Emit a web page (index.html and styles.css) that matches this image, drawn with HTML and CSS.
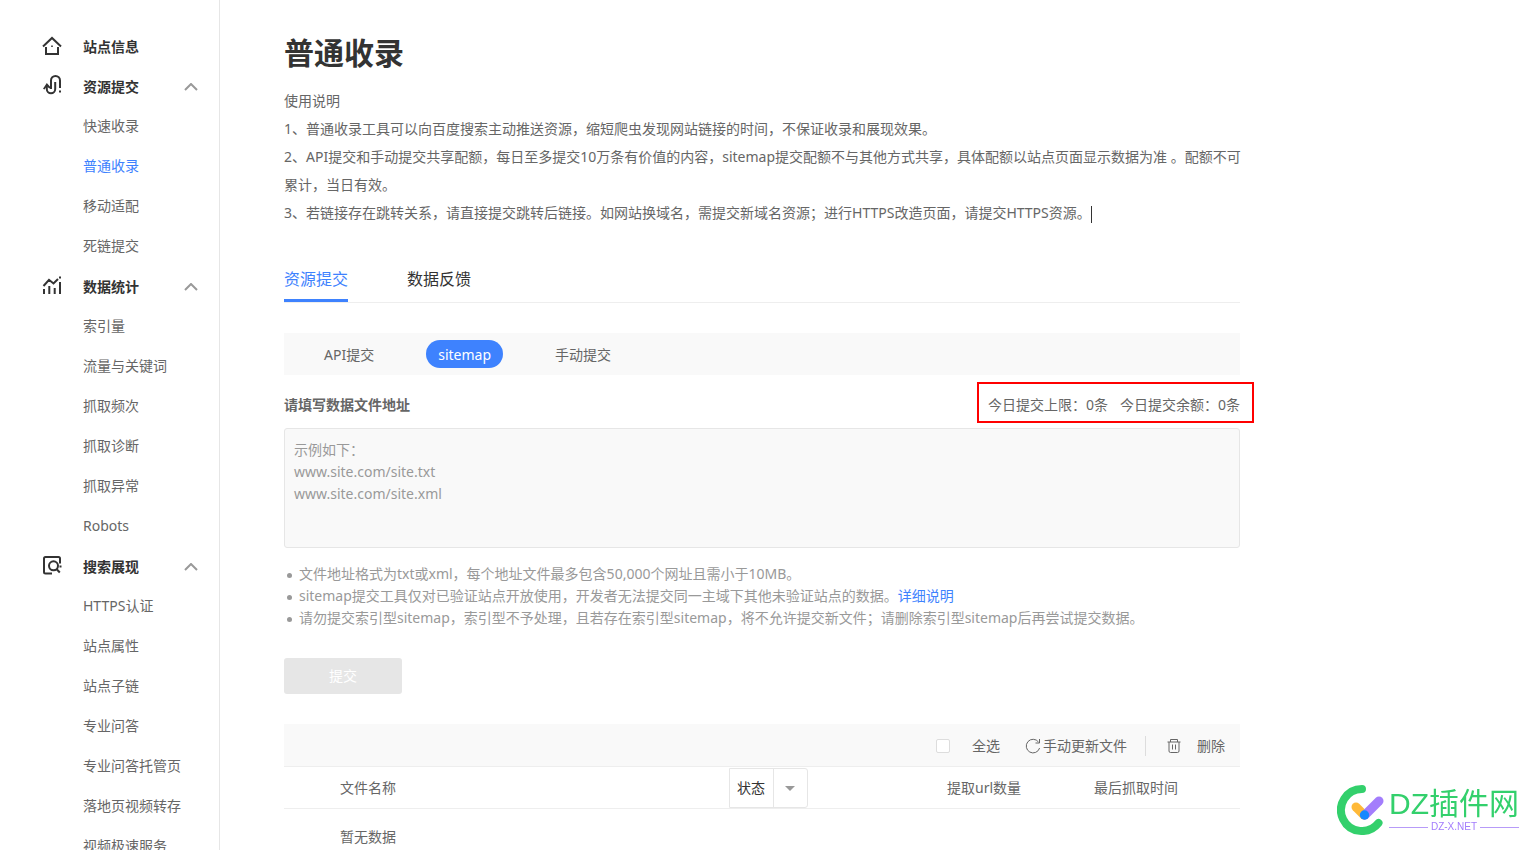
FILE: index.html
```html
<!DOCTYPE html>
<html lang="zh-CN">
<head>
<meta charset="utf-8">
<title>普通收录</title>
<link rel="stylesheet" href="styles.css">
</head>
<body>
<div class="page">
  <aside class="sidebar">
    <nav>
      <section class="group">
        <a class="group-head" href="#">
          <svg class="group-icon" viewBox="0 0 20 20"><path d="M1 11.500 10 3l9 8.500M4 12V19h12v-7"/><path class="solid" d="M9.200 10.500h1.600v1.600H9.200z"/></svg>
          <span>站点信息</span>
        </a>
      </section>
      <section class="group">
        <button class="group-head" type="button">
          <svg class="group-icon" viewBox="0 0 20 20"><path d="M4.800 11v3a4.200 4.200 0 0 0 8.400 0V7M9 14V5.500a4.500 4.500 0 0 1 9 0v7.500"/><path class="solid" d="M1 13.800 4.800 8 9 12.800 7.500 13.600 4.800 11.500 2.500 14.500zM17 15.500h2v2h-2z"/></svg>
          <span>资源提交</span>
          <svg class="chevron" viewBox="0 0 14 8"><path d="M1 7l6-6 6 6"/></svg>
        </button>
        <ul>
          <li><a href="#">快速收录</a></li>
          <li><a class="current" href="#">普通收录</a></li>
          <li><a href="#">移动适配</a></li>
          <li><a href="#">死链提交</a></li>
        </ul>
      </section>
      <section class="group">
        <button class="group-head" type="button">
          <svg class="group-icon" viewBox="0 0 20 20"><path d="M1.500 11 7 4.800l4.500 3.700L16 4M2 14v5M7.300 11v8M12.700 13v6M18 7v12"/><path class="solid" d="M17 1.500h2v2h-2z"/></svg>
          <span>数据统计</span>
          <svg class="chevron" viewBox="0 0 14 8"><path d="M1 7l6-6 6 6"/></svg>
        </button>
        <ul>
          <li><a href="#">索引量</a></li>
          <li><a href="#">流量与关键词</a></li>
          <li><a href="#">抓取频次</a></li>
          <li><a href="#">抓取诊断</a></li>
          <li><a href="#">抓取异常</a></li>
          <li><a href="#">Robots</a></li>
        </ul>
      </section>
      <section class="group">
        <button class="group-head" type="button">
          <svg class="group-icon" viewBox="0 0 20 20"><path d="M10 18.500H3.500a1.500 1.500 0 0 1-1.500-1.500V3.500A1.500 1.500 0 0 1 3.500 2h13A1.500 1.500 0 0 1 18 3.500v5"/><circle cx="11.500" cy="10.800" r="4.500"/><path d="M14.500 14l3.300 3.500"/><path class="solid" d="M17.500 10.500h2v2h-2z"/></svg>
          <span>搜索展现</span>
          <svg class="chevron" viewBox="0 0 14 8"><path d="M1 7l6-6 6 6"/></svg>
        </button>
        <ul>
          <li><a href="#">HTTPS认证</a></li>
          <li><a href="#">站点属性</a></li>
          <li><a href="#">站点子链</a></li>
          <li><a href="#">专业问答</a></li>
          <li><a href="#">专业问答托管页</a></li>
          <li><a href="#">落地页视频转存</a></li>
          <li><a href="#">视频极速服务</a></li>
        </ul>
      </section>
    </nav>
  </aside>

  <main class="content">
    <h1>普通收录</h1>
    <div class="intro">
      <p>使用说明</p>
      <p>1、普通收录工具可以向百度搜索主动推送资源，缩短爬虫发现网站链接的时间，不保证收录和展现效果。</p>
      <p>2、API提交和手动提交共享配额，每日至多提交10万条有价值的内容，sitemap提交配额不与其他方式共享，具体配额以站点页面显示数据为准 。配额不可<br>累计，当日有效。</p>
      <p>3、若链接存在跳转关系，请直接提交跳转后链接。如网站换域名，需提交新域名资源；进行HTTPS改造页面，请提交HTTPS资源。<span class="caret"></span></p>
    </div>

    <div class="tabs">
      <a class="tab active" href="#">资源提交</a>
      <a class="tab" href="#">数据反馈</a>
    </div>

    <div class="modes">
      <button class="mode" type="button">API提交</button>
      <button class="mode selected" type="button">sitemap</button>
      <button class="mode" type="button">手动提交</button>
    </div>

    <form>
      <div class="field-head">
        <label for="urls">请填写数据文件地址</label>
        <div class="quota"><span>今日提交上限：0条</span><span>今日提交余额：0条</span></div>
      </div>
      <textarea id="urls" placeholder="示例如下：
www.site.com/site.txt
www.site.com/site.xml"></textarea>
      <ul class="tips">
        <li>文件地址格式为txt或xml，每个地址文件最多包含50,000个网址且需小于10MB。</li>
        <li>sitemap提交工具仅对已验证站点开放使用，开发者无法提交同一主域下其他未验证站点的数据。<a href="#">详细说明</a></li>
        <li>请勿提交索引型sitemap，索引型不予处理，且若存在索引型sitemap，将不允许提交新文件；请删除索引型sitemap后再尝试提交数据。</li>
      </ul>
      <button class="submit" type="button">提交</button>
    </form>

    <div class="toolbar">
      <label class="select-all"><input type="checkbox"><span>全选</span></label>
      <button class="tool refresh" type="button">
        <svg viewBox="0 0 16 16"><path d="M13.500 4A6.800 6.800 0 1 0 14.600 10M14.500 1v4h-4"/></svg>
        <span>手动更新文件</span>
      </button>
      <button class="tool remove" type="button">
        <svg viewBox="0 0 16 16"><path d="M1.500 4h13M4.500 4V1.500h7V4M3 4v9a1.500 1.500 0 0 0 1.500 1.500h7A1.500 1.500 0 0 0 13 13V4M6.500 6.500v5M9.500 6.500v5"/></svg>
        <span>删除</span>
      </button>
    </div>
    <table>
      <thead>
        <tr>
          <th class="col-name">文件名称</th>
          <th class="col-status">
            <div class="status">
              <select aria-label="状态"><option>状态</option></select>
              <svg viewBox="0 0 10 5"><path d="M0 0h10L5 5z"/></svg>
            </div>
          </th>
          <th class="col-count">提取url数量</th>
          <th>最后抓取时间</th>
        </tr>
      </thead>
      <tbody>
        <tr><td class="col-name" colspan="4">暂无数据</td></tr>
      </tbody>
    </table>
  </main>
</div>

<div class="brand">
  <svg class="brand-mark" viewBox="0 0 48 50">
    <path d="M25 4A21 21 0 1 0 41.500 38" stroke="#33d06c" stroke-width="8"/>
    <path d="M19 22l8 8" stroke="#ffb938" stroke-width="9"/>
    <path d="M42 16 28 30" stroke="#a37dfc" stroke-width="9"/>
    <circle cx="27.500" cy="30" r="4.700" fill="#1588ff"/>
  </svg>
  <div class="brand-text">
    <span class="brand-name">DZ插件网</span>
    <span class="brand-site">DZ-X.NET</span>
  </div>
</div>
</body>
</html>
```

FILE: styles.css
```css
* { box-sizing: border-box; }

body {
  margin: 0;
  background: #fff;
  color: #666;
  font: 14px/20px "Noto Sans", "Noto Sans CJK SC", sans-serif;
}

button, textarea, select, input { font: inherit; color: inherit; }
button { padding: 0; border: 0; background: none; cursor: pointer; }
a { color: inherit; text-decoration: none; }
ul { margin: 0; padding: 0; list-style: none; }
svg { fill: none; flex: none; }

.page {
  display: flex;
  height: 100vh;
  overflow: hidden;
}

.sidebar {
  flex: none;
  width: 220px;
  padding-top: 26px;
  border-right: 1px solid #e6e6e6;
}

.group-head {
  display: flex;
  align-items: center;
  width: 100%;
  height: 40px;
  padding: 2px 21px 0 42px;
  color: #333;
  font-weight: 700;
}

.group-icon {
  width: 20px;
  height: 20px;
  margin: 0 21px 4px 0;
  stroke: #333;
  stroke-width: 2;
}
.group-icon .solid { fill: #333; stroke: none; }

.chevron {
  width: 14px;
  height: 8px;
  margin-left: auto;
  stroke: #999;
  stroke-width: 2;
}

.group li a {
  display: block;
  padding-left: 83px;
  line-height: 40px;
}
.group li .current { color: #3e82fe; }

.content {
  flex: 1;
  max-width: 1020px;
  padding: 31px 0 0 64px;
}

h1 {
  margin: 0 0 12px;
  color: #333;
  font-size: 30px;
  line-height: 44px;
}

.intro { line-height: 28px; white-space: nowrap; }
.intro p { margin: 0; }
.caret {
  display: inline-block;
  height: 17px;
  border-left: 1px solid #333;
  vertical-align: middle;
}

.tabs {
  display: flex;
  gap: 59px;
  margin-top: 29px;
  border-bottom: 1px solid #eee;
  color: #333;
  font-size: 16px;
}
.tab {
  padding: 12px 0 8px;
  border-bottom: 3px solid transparent;
  line-height: 23px;
}
.tab.active { border-color: #3e82fe; color: #3e82fe; }

.modes {
  display: flex;
  gap: 40px;
  margin-top: 30px;
  padding: 7px 28px;
  background: #f9f9f9;
}
.mode {
  height: 28px;
  padding: 2px 12px 0;
  border-radius: 14px;
}
.mode.selected { background: #3e82fe; color: #fff; }

.field-head {
  display: flex;
  justify-content: space-between;
  align-items: center;
  padding: 20px 0 13px;
}
.field-head label { font-weight: 700; }

.quota {
  position: relative;
  display: flex;
  gap: 12px;
}
.quota::after {
  content: "";
  position: absolute;
  inset: -13px -14px -8px -11px;
  border: 2px solid #f00;
}

textarea {
  display: block;
  width: 100%;
  height: 120px;
  padding: 10px 9px;
  border: 1px solid #e6e6e6;
  border-radius: 3px;
  background: #f9f9f9;
  line-height: 22px;
  resize: none;
}
textarea::placeholder { color: #999; }

.tips {
  margin-top: 15px;
  color: #999;
  line-height: 22px;
  white-space: nowrap;
}
.tips li { display: flex; align-items: center; }
.tips li::before {
  content: "";
  width: 5px;
  height: 5px;
  margin: 2px 7px 0 3px;
  border-radius: 50%;
  background: #999;
}
.tips a { color: #3e82fe; }

.submit {
  width: 118px;
  height: 36px;
  margin-top: 29px;
  border-radius: 3px;
  background: #e6e6e6;
  color: #fff;
}

.toolbar {
  display: flex;
  justify-content: flex-end;
  align-items: center;
  height: 43px;
  margin-top: 30px;
  padding: 2px 15px 0 0;
  border-bottom: 1px solid #eee;
  background: #f9f9f9;
}
.select-all, .tool { display: flex; align-items: center; }
.select-all { gap: 22px; }
.select-all input {
  appearance: none;
  width: 14px;
  height: 14px;
  margin: 0;
  border: 1px solid #ddd;
  border-radius: 2px;
  background: #fff;
}
.tool svg { width: 16px; height: 16px; stroke: #666; }
.refresh { gap: 2px; margin-left: 25px; }
.remove {
  gap: 15px;
  margin-left: 18px;
  padding-left: 20px;
  border-left: 1px solid #ddd;
}

table {
  width: 100%;
  border-collapse: collapse;
  table-layout: fixed;
  text-align: left;
}
th {
  height: 41px;
  padding: 1px 0 0;
  border-bottom: 1px solid #eee;
  font-weight: 400;
}
td { height: 56px; padding: 0; }
th.col-name { width: 445px; }
.col-name { padding-left: 56px; }
.col-status { width: 218px; }
.col-count { width: 147px; }

.status {
  position: relative;
  display: flex;
  width: 79px;
  height: 40px;
  border: 1px solid #e6e6e6;
  border-radius: 0 3px 3px 0;
  background: linear-gradient(#e6e6e6, #e6e6e6) 43px 0 / 1px 100% no-repeat;
}
.status select {
  appearance: none;
  width: 100%;
  padding: 0 0 0 7px;
  border: 0;
  background: none;
  color: #333;
}
.status svg {
  position: absolute;
  top: 17px;
  right: 12px;
  width: 10px;
  height: 5px;
  fill: #999;
  pointer-events: none;
}

.brand {
  position: fixed;
  right: 18px;
  bottom: 15px;
  display: flex;
  align-items: flex-end;
  gap: 4px;
}
.brand-mark {
  width: 48px;
  height: 50px;
  stroke-linecap: round;
}
.brand-text {
  display: flex;
  flex-direction: column;
  gap: 1px;
  padding-bottom: 3px;
}
.brand-name {
  color: #33d06c;
  font: 30px/34px "Liberation Sans", "Noto Sans CJK SC", sans-serif;
}
.brand-site {
  display: flex;
  align-items: center;
  gap: 3px;
  color: #a37dfc;
  font: 10px/10px "Liberation Sans", sans-serif;
}
.brand-site::before, .brand-site::after {
  content: "";
  flex: 1;
  height: 1px;
  background: #b79bf8;
}
```
